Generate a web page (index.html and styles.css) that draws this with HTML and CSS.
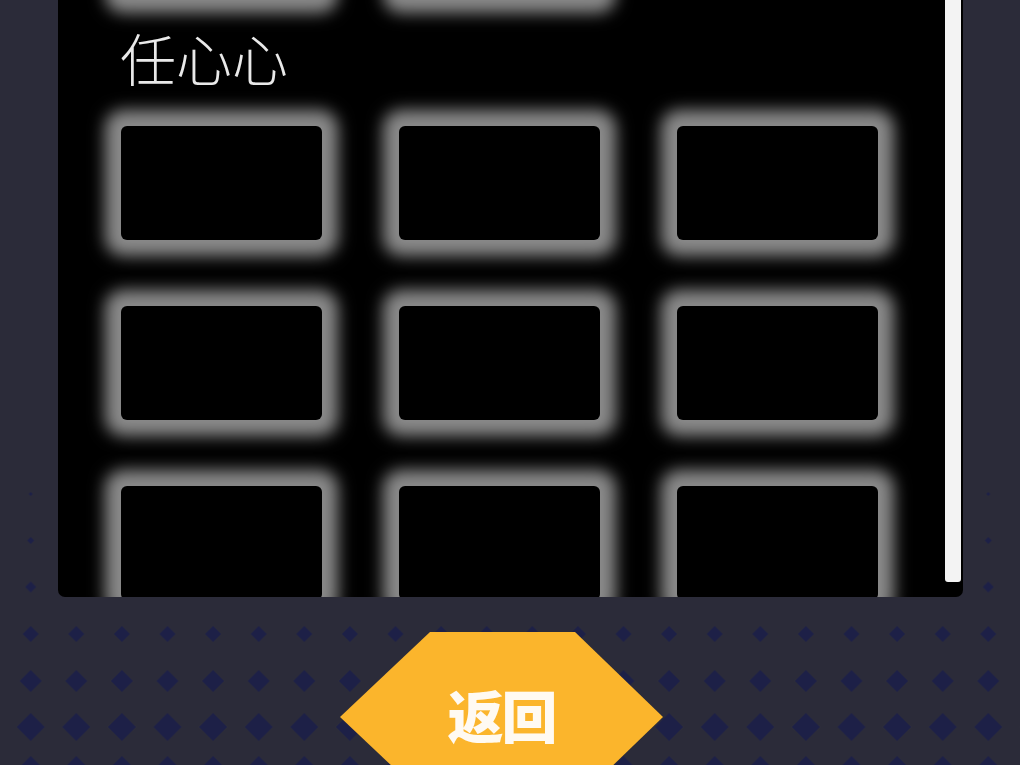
FILE: index.html
```html
<!DOCTYPE html>
<html lang="zh">
<head>
<meta charset="utf-8">
<title>任心心</title>
<link rel="stylesheet" href="styles.css">
</head>
<body>
<svg class="backdrop" width="1020" height="765" viewBox="0 0 1020 765" aria-hidden="true">
  <defs>
    <pattern id="dA" x="7.9" y="492" width="45.6" height="4" patternUnits="userSpaceOnUse"><polygon points="20.8,2 22.8,0 24.8,2 22.8,4"/></pattern>
    <pattern id="dB" x="7.9" y="537" width="45.6" height="7" patternUnits="userSpaceOnUse"><polygon points="19.3,3.5 22.8,0 26.3,3.5 22.8,7"/></pattern>
    <pattern id="dC" x="7.9" y="581.5" width="45.6" height="11" patternUnits="userSpaceOnUse"><polygon points="17.3,5.5 22.8,0 28.3,5.5 22.8,11"/></pattern>
    <pattern id="dD" x="7.9" y="626" width="45.6" height="16" patternUnits="userSpaceOnUse"><polygon points="14.8,8 22.8,0 30.8,8 22.8,16"/></pattern>
    <pattern id="dE" x="7.9" y="670" width="45.6" height="22" patternUnits="userSpaceOnUse"><polygon points="11.8,11 22.8,0 33.8,11 22.8,22"/></pattern>
    <pattern id="dF" x="7.9" y="713" width="45.6" height="28" patternUnits="userSpaceOnUse"><polygon points="8.8,14 22.8,0 36.8,14 22.8,28"/></pattern>
    <pattern id="dG" x="7.9" y="756" width="45.6" height="34" patternUnits="userSpaceOnUse"><polygon points="5.8,17 22.8,0 39.8,17 22.8,34"/></pattern>
  </defs>
  <rect x="0" y="492" width="1020" height="4" fill="url(#dA)"/>
  <rect x="0" y="537" width="1020" height="7" fill="url(#dB)"/>
  <rect x="0" y="581.5" width="1020" height="11" fill="url(#dC)"/>
  <rect x="0" y="626" width="1020" height="16" fill="url(#dD)"/>
  <rect x="0" y="670" width="1020" height="22" fill="url(#dE)"/>
  <rect x="0" y="713" width="1020" height="28" fill="url(#dF)"/>
  <rect x="0" y="756" width="1020" height="34" fill="url(#dG)"/>
</svg>

<main class="panel">
  <div class="scroll">
    <section class="group">
      <div class="grid">
        <div class="card"></div>
        <div class="card"></div>
      </div>
    </section>
    <section class="group">
      <h2 class="group-title">任心心</h2>
      <div class="grid">
        <div class="card"></div>
        <div class="card"></div>
        <div class="card"></div>
        <div class="card"></div>
        <div class="card"></div>
        <div class="card"></div>
        <div class="card"></div>
        <div class="card"></div>
        <div class="card"></div>
      </div>
    </section>
  </div>
  <div class="thumb"></div>
</main>

<footer class="footer">
  <button class="back-btn" type="button">返回</button>
</footer>
</body>
</html>
```

FILE: styles.css
```css
html, body {
  margin: 0;
  padding: 0;
  width: 1020px;
  height: 765px;
  overflow: hidden;
}

body {
  background: #2b2b39;
  font-family: "Noto Sans CJK SC", "Noto Sans", sans-serif;
  position: relative;
}

.backdrop {
  position: absolute;
  left: 0;
  top: 0;
  fill: #1d2047;
}

.panel {
  position: relative;
  margin-left: 58px;
  width: 905px;
  height: 597px;
  background: #000;
  border-radius: 0 0 7px 7px;
  overflow: hidden;
}

.scroll {
  margin-top: -117px;
  padding-left: 63px;
}

.group-title {
  margin: 31px 0 42px -1px;
  height: 56px;
  font-size: 56px;
  line-height: 58px;
  font-weight: 300;
  color: #e9e9e9;
  letter-spacing: 0;
}

.grid {
  display: grid;
  grid-template-columns: repeat(3, 201px);
  column-gap: 77px;
  row-gap: 66px;
}

.card {
  height: 114px;
  background: #000;
  border-radius: 6px;
  box-shadow: 0 0 16px 16px #8a8a8a;
}

.thumb {
  position: absolute;
  right: 2px;
  top: 0;
  width: 16px;
  height: 582px;
  background: #f3f3f3;
  border-radius: 0 0 3px 3px;
}

.footer {
  margin-top: 35px;
  padding-left: 340px;
}

.back-btn {
  position: relative;
  display: flex;
  align-items: flex-start;
  justify-content: center;
  width: 323px;
  height: 170px;
  padding: 54px 0 0 0;
  border: 0;
  background: #fbb52c;
  clip-path: polygon(90px 0, 235px 0, 323px 85px, 235px 170px, 90px 170px, 0 85px);
  color: #fffaf2;
  font-family: "Noto Sans CJK SC", sans-serif;
  font-weight: 900;
  font-size: 56px;
  line-height: 56px;
  letter-spacing: -2px;
}
```
